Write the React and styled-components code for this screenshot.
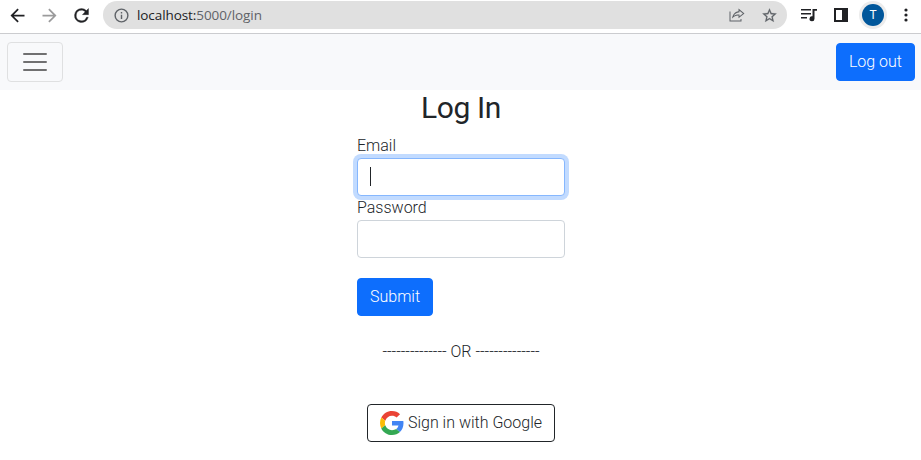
import React from "react";
import styled, { createGlobalStyle, css } from "styled-components";

const GlobalStyle = createGlobalStyle`
  *, *::before, *::after { box-sizing: border-box; }
  body {
    margin: 0;
    background: #fff;
    color: #212529;
    font: 300 16px/24px Roboto, sans-serif;
    overflow: hidden;
  }
`;

const Page = styled.div`
  display: flex;
  flex-direction: column;
  height: 460px;
`;

const BrowserBar = styled.header`
  display: flex;
  align-items: flex-start;
  height: 34px;
  flex: none;
  padding: 1px 5px 0 6.5px;
  border-bottom: 1px solid #cbcccf;
`;

const ToolIcon = styled.svg`
  display: block;
  flex: none;
  width: ${(p) => p.$size || 20}px;
  height: ${(p) => p.$size || 20}px;
  margin: ${(p) => p.$margin || "0"};
  fill: ${(p) => p.$color || "#202124"};
`;

const AddressBar = styled.div`
  display: flex;
  align-items: center;
  flex: none;
  width: 684px;
  height: 28px;
  margin-left: 11.5px;
  padding: 0 9px 0 9.5px;
  border-radius: 14px;
  background: #e0e0e0;
`;

const Url = styled.div`
  flex: 1;
  margin-left: 7.5px;
  font: 400 13.5px/20px "Open Sans", sans-serif;
  letter-spacing: -0.08px;
  color: #5f6368;
`;

const Host = styled.span`
  color: #202124;
`;

const AvatarRing = styled.div`
  display: grid;
  place-items: center;
  flex: none;
  width: 28px;
  height: 28px;
  margin-left: 8px;
  border-radius: 50%;
  background: #ececec;
`;

const Avatar = styled.div`
  width: 22px;
  height: 22px;
  border-radius: 50%;
  background: #01579b;
  color: #fff;
  font: 400 12px/22px Roboto, sans-serif;
  text-align: center;
`;

const Navbar = styled.nav`
  display: flex;
  align-items: center;
  justify-content: space-between;
  flex: none;
  height: 56px;
  padding: 0 6px 0 7px;
  background: #f8f9fb;
`;

const Toggler = styled.button`
  display: grid;
  place-items: center;
  width: 56px;
  height: 40px;
  padding: 0;
  border: 1px solid #dfe0e1;
  border-radius: 4px;
  background: transparent;
`;

const TogglerIcon = styled.svg`
  display: block;
  width: 30px;
  height: 30px;
  stroke: rgba(0, 0, 0, 0.55);
  stroke-width: 2;
  stroke-linecap: round;
`;

const Button = styled.button`
  display: inline-flex;
  align-items: center;
  height: 38px;
  padding: 0 12px;
  border: 1px solid #0d6efd;
  border-radius: 4px;
  background: #0d6efd;
  color: #fff;
  font: inherit;
  white-space: nowrap;
  ${(p) =>
    p.$outline &&
    css`
      border-color: #212529;
      background: #fff;
      color: #212529;
    `}
`;

const Main = styled.main`
  display: flex;
  flex-direction: column;
  align-items: center;
  padding-left: 1px;
`;

const Title = styled.h1`
  margin: 0 0 8px;
  font-size: 30px;
  font-weight: 400;
  line-height: 36px;
  letter-spacing: -0.35px;
`;

const Form = styled.form`
  display: flex;
  flex-direction: column;
  align-items: flex-start;
  width: 208px;
`;

const Label = styled.label`
  height: 24px;
`;

const Field = styled.div`
  display: flex;
  align-items: center;
  width: 100%;
  height: 38px;
  padding: 0 12px;
  border: 1px solid ${(p) => (p.$focused ? "#86b7fe" : "#ced4da")};
  border-radius: 4px;
  background: #fff;
  box-shadow: ${(p) => (p.$focused ? "0 0 0 4px #c2dbff" : "none")};
`;

const Caret = styled.span`
  width: 1px;
  height: 19px;
  margin-bottom: 1px;
  background: #212529;
`;

const SubmitRow = styled.div`
  margin-top: 20px;
`;

const Divider = styled.div`
  margin: 24px 0 40px;
  white-space: nowrap;
`;

const GoogleLogo = styled.svg`
  width: 24px;
  height: 24px;
  margin-right: 4px;
`;

export default function App() {
  return (
    <Page>
      <GlobalStyle />
      <BrowserBar>
        <ToolIcon viewBox="0 0 24 24" $size={21} $margin="4px 0 0"><path d="M20 11H7.83l5.59-5.59L12 4l-8 8 8 8 1.41-1.41L7.83 13H20z" /></ToolIcon>
        <ToolIcon viewBox="0 0 24 24" $size={21} $margin="4px 0 0 11px" $color="#9b9b9c"><path d="m12 4-1.410 1.410L16.170 11H4v2h12.170l-5.580 5.590L12 20l8-8z" /></ToolIcon>
        <ToolIcon viewBox="0 0 24 24" $size={21} $margin="4px 0 0 11px" stroke="#202124" strokeWidth="0.4"><path d="M17.650 6.350A7.960 7.960 0 0 0 12 4a8 8 0 1 0 7.730 10h-2.080A6 6 0 1 1 12 6c1.660 0 3.140.69 4.220 1.780L13 11h7V4z" /></ToolIcon>
        <AddressBar>
          <ToolIcon viewBox="0 0 24 24" $size={17} $color="#5f6368"><path d="M11 7h2v2h-2zm0 4h2v6h-2zm1-9a10 10 0 1 0 0 20 10 10 0 0 0 0-20zm0 18a8 8 0 1 1 0-16 8 8 0 0 1 0 16z" /></ToolIcon>
          <Url><Host>localhost:</Host>5000/login</Url>
          <ToolIcon viewBox="0 0 16 16" $size={16} $margin="0 16px 0 0" $color="#5f6368"><path d="M.5 4.500v10h12V12h-1v1.500h-10v-9zM9.500 1.500l6 4.900-6 4.900V8.500C6.800 8.500 4.800 9.400 3 11.500 3.500 7.700 5.700 4.800 9.500 4.200zm1 2.200v1.500C7.500 5.500 5.700 6.700 4.800 8.900c1.600-1.100 3.400-1.500 5.700-1.400v1.700l3.400-2.800z" /></ToolIcon>
          <ToolIcon viewBox="0 0 24 24" $size={17} $color="#5f6368" stroke="#5f6368" strokeWidth="0.3"><path d="m22 9.240-7.190-.62L12 2 9.190 8.630 2 9.240l5.460 4.730L5.820 21 12 17.270 18.180 21l-1.630-7.030zM12 15.400l-3.760 2.270 1-4.280-3.320-2.880 4.380-.38L12 6.100l1.710 4.040 4.380.38-3.320 2.880 1 4.280z" /></ToolIcon>
        </AddressBar>
        <ToolIcon viewBox="0 0 20 20" $margin="4px 0 0 12px"><path d="M2 4h10v1.500H2zm0 4h10v1.500H2zm0 4h6v1.500H2zM13.500 4H18v1.800h-2.500v8a2.500 2.500 0 1 1-2-2.450z" /></ToolIcon>
        <ToolIcon viewBox="0 0 20 20" $margin="4px 0 0 12px"><path fillRule="evenodd" d="M3 3h14v14H3zm2 2v10h6V5z" /></ToolIcon>
        <AvatarRing><Avatar>T</Avatar></AvatarRing>
        <ToolIcon viewBox="0 0 20 20" $margin="4px 0 0 9px"><circle cx="10" cy="5" r="1.600" /><circle cx="10" cy="10" r="1.600" /><circle cx="10" cy="15" r="1.600" /></ToolIcon>
      </BrowserBar>
      <Navbar>
        <Toggler aria-label="Menu"><TogglerIcon viewBox="0 0 30 30"><path d="M4 7h22M4 15h22M4 23h22" /></TogglerIcon></Toggler>
        <Button>Log out</Button>
      </Navbar>
      <Main>
        <Title>Log In</Title>
        <Form>
          <Label>Email</Label>
          <Field $focused><Caret /></Field>
          <Label>Password</Label>
          <Field />
          <SubmitRow><Button type="button">Submit</Button></SubmitRow>
        </Form>
        <Divider>-------------- OR --------------</Divider>
        <Button $outline>
          <GoogleLogo viewBox="0 0 48 48">
            <path fill="#EA4335" d="M24 9.500c3.540 0 6.710 1.220 9.210 3.600l6.850-6.850C35.900 2.380 30.470 0 24 0 14.620 0 6.510 5.380 2.560 13.220l7.980 6.190C12.430 13.720 17.740 9.500 24 9.500z" />
            <path fill="#4285F4" d="M46.980 24.550c0-1.570-.15-3.090-.38-4.550H24v9.020h12.940c-.58 2.960-2.260 5.480-4.780 7.180l7.730 6c4.510-4.180 7.090-10.360 7.090-17.650z" />
            <path fill="#FBBC05" d="M10.530 28.590A14.500 14.500 0 0 1 9.770 24c0-1.600.27-3.140.76-4.590l-7.980-6.190A23.900 23.900 0 0 0 0 24c0 3.880.92 7.540 2.560 10.780z" />
            <path fill="#34A853" d="M24 48c6.480 0 11.930-2.130 15.890-5.810l-7.730-6c-2.150 1.450-4.920 2.300-8.160 2.300-6.260 0-11.570-4.220-13.470-9.910l-7.980 6.190C6.510 42.620 14.620 48 24 48z" />
          </GoogleLogo>
          Sign in with Google
        </Button>
      </Main>
    </Page>
  );
}
